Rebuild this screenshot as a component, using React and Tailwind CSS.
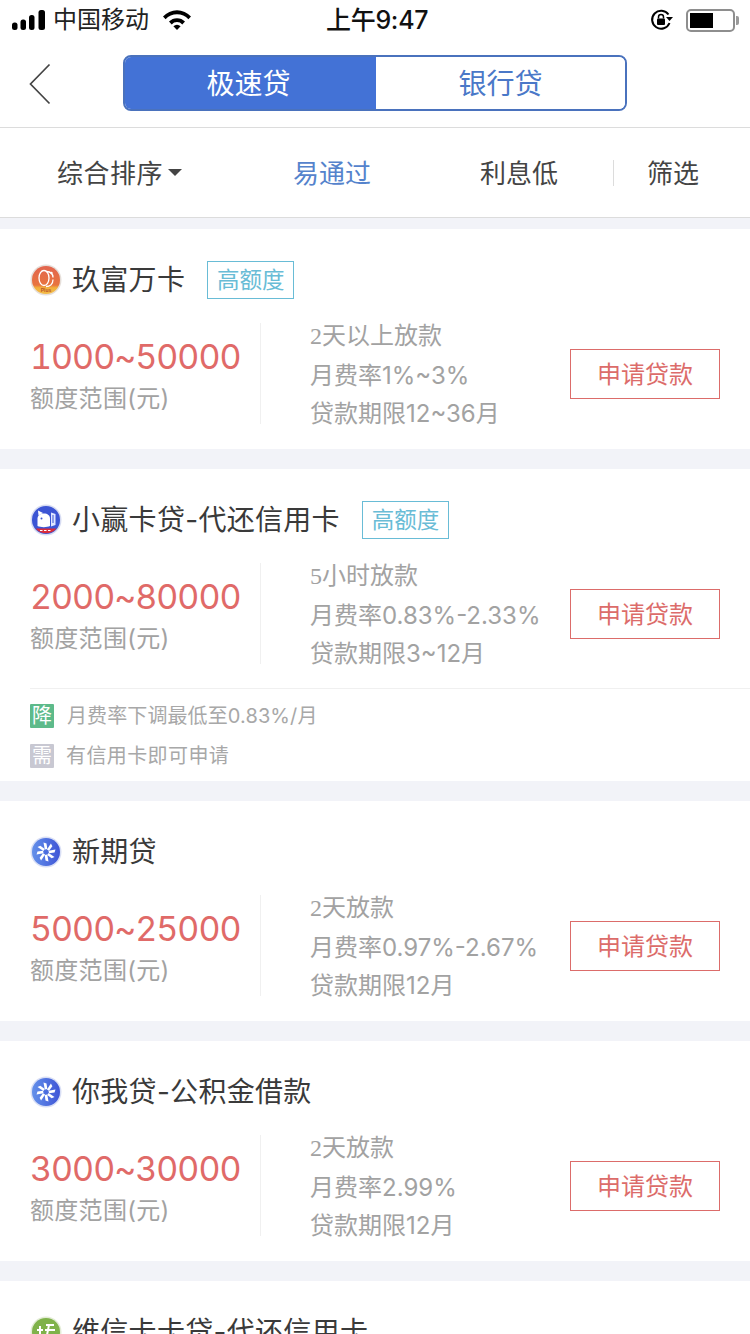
const FONT = "font-['Inter','Noto_Sans_CJK_SC',sans-serif]";

function JiuIcon() {
  return (
    <svg width="32" height="32" viewBox="0 0 32 32" className="shrink-0">
      <defs>
        <linearGradient id="jf" x1="0" y1="0" x2="0" y2="1">
          <stop offset="0" stopColor="#e2654f" />
          <stop offset="0.68" stopColor="#e8743f" />
          <stop offset="0.78" stopColor="#f2b13c" />
          <stop offset="1" stopColor="#f3bb48" />
        </linearGradient>
      </defs>
      <circle cx="16" cy="16" r="15.5" fill="#e6dfda" />
      <circle cx="16" cy="16" r="14" fill="url(#jf)" />
      <ellipse cx="14" cy="14" rx="5" ry="7.500" fill="none" stroke="#fff" strokeWidth="1.300" />
      <path d="M16.500 7.500c4 .3 6.500 2.500 6.500 6M23 15.500c0 4.500-3 7-7 7" fill="none" stroke="#fff" strokeWidth="1.300" />
      <circle cx="21.500" cy="9" r="1.200" fill="#fff" />
      <text x="16" y="28" textAnchor="middle" fontSize="5" fontWeight="700" fill="#b9552a" fontFamily="Liberation Sans">Plus</text>
    </svg>
  );
}

function YingIcon() {
  return (
    <svg width="32" height="32" viewBox="0 0 32 32" className="shrink-0">
      <circle cx="16" cy="16" r="15.5" fill="#d7dcf2" />
      <circle cx="16" cy="16" r="14" fill="#3c55d4" />
      <path d="M7.500 14.500c0-3 3-5 6.500-5s6 2 6 5v7.500c-3 1.500-9.500 1.500-12.500 0z" fill="#fff" />
      <path d="M8 6.500l5 2.500-4.500 2.500z" fill="#fff" />
      <path d="M21 8.500l4.500 1.500v11l-4.500 1.500z" fill="#dfe6ff" />
      <path d="M23 11v8" stroke="#3c55d4" strokeWidth="1" />
      <circle cx="11.500" cy="14.500" r="1" fill="#3c55d4" />
      <path d="M5.500 24.500h21a14 14 0 0 1-21 0z" fill="#d92c3a" />
      <path d="M10 26.500h2.500M14 26.500h2.500M18 26.500h2.500" stroke="#fff" strokeWidth="1.200" />
    </svg>
  );
}

function FlakeIcon() {
  const blades = [0, 45, 90, 135, 180, 225, 270, 315];
  return (
    <svg width="32" height="32" viewBox="0 0 32 32" className="shrink-0">
      <defs>
        <linearGradient id="fk" x1="0" y1="0" x2="1" y2="0">
          <stop offset="0" stopColor="#6390ea" />
          <stop offset="1" stopColor="#3f55d6" />
        </linearGradient>
      </defs>
      <circle cx="16" cy="16" r="15.5" fill="#d9dff5" />
      <circle cx="16" cy="16" r="14" fill="url(#fk)" />
      {blades.map((a) => (
        <path key={a} d="M14.800 13.500L13.500 6.500l3 1 .8 5.500z" fill="#fff" transform={`rotate(${a} 16 16)`} />
      ))}
      <circle cx="16" cy="16" r="1.600" fill="#4a6be0" />
    </svg>
  );
}

function WeiIcon() {
  return (
    <svg width="32" height="32" viewBox="0 0 32 32" className="shrink-0">
      <circle cx="16" cy="16" r="15.5" fill="#e3ecd6" />
      <circle cx="16" cy="16" r="14" fill="#7fb24a" />
      <path d="M10 10v14M7 14h6M16 9h8M15 14h10M19 9l-2 10h7l-3 5" fill="none" stroke="#fff" strokeWidth="2" />
    </svg>
  );
}

function Loan({ icon, name, tag, amount, speedDigit, speed, rate, term, notes }) {
  return (
    <section className="bg-white mb-5">
      <div className="flex items-center h-[94px] pl-[30px] pt-[8px]">
        {icon}
        <span className="ml-[10px] text-[28px] leading-[36px] tracking-[0.3px] text-[#3a3a3a]">{name}</span>
        {tag && (
          <span className="ml-[22px] w-[87px] h-[38px] flex items-center justify-center border border-[#69bcd6] text-[22.5px] text-[#69bcd6]">
            {tag}
          </span>
        )}
      </div>
      <div className="flex items-center h-[101px] pl-[30px] pr-[30px]">
        <div className="w-[231px] h-full border-r border-[#f0f0f0] flex flex-col justify-center pt-[2px]">
          <div className="text-[34px] leading-[42px] text-[#e06a68] tabular-nums tracking-[-1px]">{amount}</div>
          <div className="text-[24px] leading-[30px] text-[#a2a2a2] mt-[6px] tracking-[0.3px]">额度范围(元)</div>
        </div>
        <div className="flex-1 pl-[49px] pt-[1px] text-[24px] leading-[39px] text-[#a2a2a2] whitespace-nowrap">
          <div><span className="font-['Liberation_Serif','Noto_Sans_CJK_SC',serif]">{speedDigit}</span>{speed}</div>
          <div>{rate}</div>
          <div className="mt-[-1px]">{term}</div>
        </div>
        <button className="w-[150px] h-[50px] border border-[#dc6c6a] text-[24px] text-[#dc6c6a] flex items-center justify-center pt-[2px]">
          申请贷款
        </button>
      </div>
      {notes ? (
        <div className="mt-[24px] ml-[30px] h-[93px] border-t border-[#f0f0f0] pt-[15px] text-[20px] text-[#a8a8a8]">
          <div className="flex items-center h-[24px]">
            <span className="w-6 h-6 bg-[#5dba8a] text-white text-[20px] leading-6 text-center rounded-[1px]">降</span>
            <span className="ml-[13px] tracking-[0.1px]">{notes[0]}</span>
          </div>
          <div className="flex items-center h-[24px] mt-[16px]">
            <span className="w-6 h-6 bg-[#c8c8d2] text-white text-[20px] leading-6 text-center rounded-[1px]">需</span>
            <span className="ml-[12px] tracking-[0.4px]">{notes[1]}</span>
          </div>
        </div>
      ) : (
        <div className="h-[25px]" />
      )}
    </section>
  );
}

export default function App() {
  return (
    <div className={`w-[750px] h-[1334px] overflow-hidden bg-[#f2f3f8] ${FONT}`}>
      <header className="bg-white h-[128px] border-b border-[#dcdcdc]">
        <div className="relative h-10 flex items-center pl-3 text-[24px] text-[#111]">
          <svg width="34" height="20" viewBox="0 0 34 20" className="shrink-0">
            <rect x="0" y="12.500" width="5.500" height="7.500" rx="2.500" fill="#000" />
            <rect x="8.500" y="9.500" width="5.500" height="10.500" rx="2.500" fill="#000" />
            <rect x="17" y="5" width="5.500" height="15" rx="2.500" fill="#000" />
            <rect x="26.500" y="0" width="6.500" height="20" rx="2.500" fill="#000" />
          </svg>
          <span className="ml-[7px] text-[24px] text-[#222]">中国移动</span>
          <svg width="30" height="22" viewBox="0 0 30 22" className="ml-[13px]">
            <path d="M1 7.500a19 19 0 0 1 28 0l-2.600 2.800a15.500 15.500 0 0 0-22.800 0z" fill="#000" />
            <path d="M7 12.600a11 11 0 0 1 16 0l-2.700 2.800a7.200 7.200 0 0 0-10.600 0z" fill="#000" />
            <path d="M15 21l-3.600-3.700a5 5 0 0 1 7.200 0z" fill="#000" />
          </svg>
          <span className="absolute left-[326px] top-[1px] text-[25px] leading-[38px] font-medium tracking-[-0.3px] text-[#111]">上午9:47</span>
          <svg width="26" height="24" viewBox="0 0 26 24" className="absolute left-[649px] top-[8px]">
            <path d="M19.500 6.500A9 9 0 1 0 20.500 15" fill="none" stroke="#000" strokeWidth="2" />
            <path d="M17 9h7l-3.500 4z" fill="#000" />
            <rect x="8" y="10.500" width="8" height="6.500" rx="1" fill="#000" />
            <path d="M9.500 10.500V9a2.500 2.500 0 0 1 5 0v1.500" fill="none" stroke="#000" strokeWidth="1.500" />
          </svg>
          <div className="absolute left-[686px] top-[9px] w-[49px] h-[23px] border-2 border-[#8e8e8e] rounded-[5px] p-[2px]">
            <div className="w-[23px] h-full bg-black" />
          </div>
          <div className="absolute left-[736px] top-[16px] w-[3px] h-[9px] bg-[#9a9a9a] rounded-r-[2px]" />
        </div>
        <div className="h-[87px] flex items-start">
          <svg width="24" height="42" viewBox="0 0 24 42" className="ml-[28px] mt-[23px] shrink-0">
            <path d="M21.500 1.500L2.500 21l19 19.500" fill="none" stroke="#444" strokeWidth="1.700" />
          </svg>
          <div className="ml-[71px] mt-[15px] w-[504px] h-[56px] flex rounded-[8px] border-2 border-[#4a72bd] overflow-hidden text-[28px]">
            <div className="w-[251px] bg-[#4372d6] text-white flex items-center justify-center pr-[4px] pt-[2px]">极速贷</div>
            <div className="flex-1 bg-white text-[#4a78c8] flex items-center justify-center pt-[2px]">银行贷</div>
          </div>
        </div>
      </header>
      <nav className="bg-white h-[90px] border-b border-[#dcdcdc] flex items-center text-[26px] text-[#444] pt-[1px]">
        <div className="ml-[57px] flex items-center w-[236px]">
          <span className="tracking-[0.5px]">综合排序</span>
          <span className="ml-[5px] mt-[-1px] w-0 h-0 border-x-[7px] border-x-transparent border-t-[7px] border-t-[#444]" />
        </div>
        <span className="text-[#5583cc] w-[187px]">易通过</span>
        <span className="w-[133px]">利息低</span>
        <span className="h-[26px] border-l border-[#dcdcdc] mr-[33px]" />
        <span>筛选</span>
      </nav>
      <div className="h-[11px]" />
      <Loan icon={<JiuIcon />} name="玖富万卡" tag="高额度" amount="1000~50000" speedDigit="2" speed="天以上放款" rate="月费率1%~3%" term="贷款期限12~36月" />
      <Loan
        icon={<YingIcon />}
        name="小赢卡贷-代还信用卡"
        tag="高额度"
        amount="2000~80000"
        speedDigit="5"
        speed="小时放款"
        rate="月费率0.83%-2.33%"
        term="贷款期限3~12月"
        notes={["月费率下调最低至0.83%/月", "有信用卡即可申请"]}
      />
      <Loan icon={<FlakeIcon />} name="新期贷" amount="5000~25000" speedDigit="2" speed="天放款" rate="月费率0.97%-2.67%" term="贷款期限12月" />
      <Loan icon={<FlakeIcon />} name="你我贷-公积金借款" amount="3000~30000" speedDigit="2" speed="天放款" rate="月费率2.99%" term="贷款期限12月" />
      <Loan icon={<WeiIcon />} name="维信卡卡贷-代还信用卡" amount="" speedDigit="" speed="" rate="" term="" />
    </div>
  );
}
